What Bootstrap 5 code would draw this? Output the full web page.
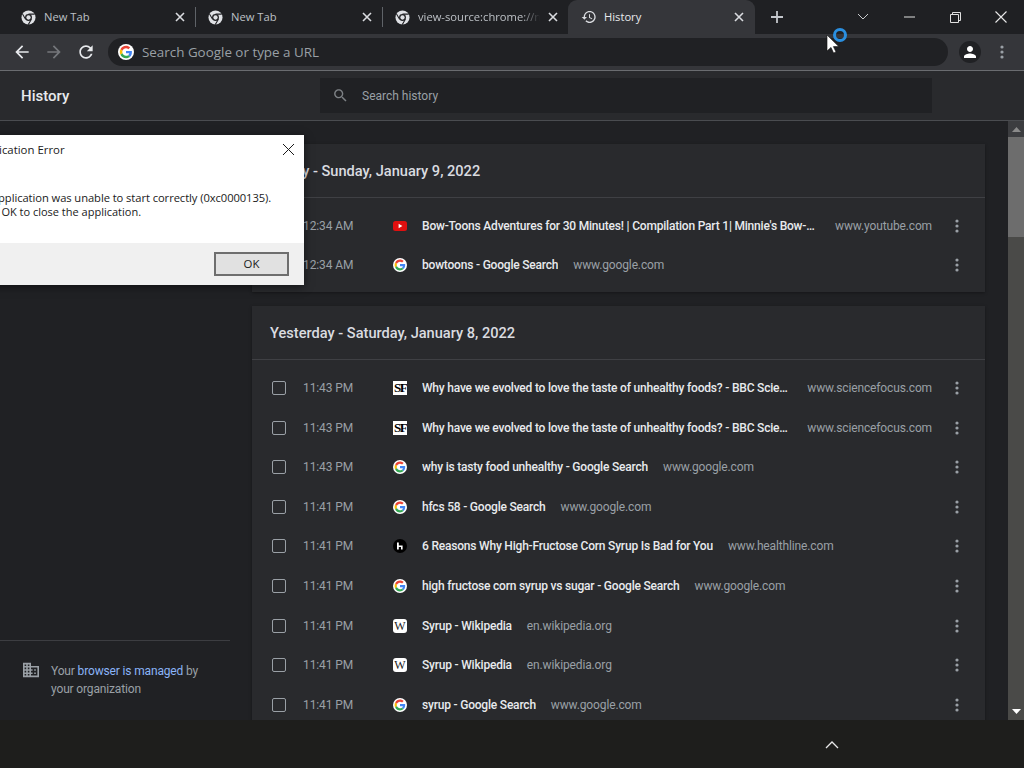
<!DOCTYPE html>
<html lang="en">
<head>
  <meta charset="UTF-8" />
  <title>History</title>
  <meta name="viewport" content="width=device-width, initial-scale=1" />
  <link href="https://cdn.jsdelivr.net/npm/bootstrap@5.3.3/dist/css/bootstrap.min.css" rel="stylesheet" />
  <style>
    html, body { height: 100%; overflow: hidden; }
    body { background: #202124; font-family: Roboto, "Liberation Sans", sans-serif; color: #e8eaed; }
    .app-shell { width: 1024px; height: 768px; position: relative; overflow: hidden; }

    /* tab strip */
    .tab-strip { height: 34px; background: #1f2023; font-family: "Open Sans", sans-serif; font-size: 11.2px; }
    .tab-item { height: 34px; flex: none; color: #bdc1c6; }
    .tab-first { width: 195px; padding-left: 21px; }
    .tab-second { width: 186px; padding-left: 12px; }
    .tab-third { width: 185px; padding-left: 12px; }
    .tab-sep { width: 1px; height: 20px; background: #5f6368; flex: none; margin-top: -1px; }
    .tab-active { width: 187px; padding-left: 13px; background: #35363a; border-radius: 9px 9px 0 0; color: #e8eaed; }
    .tab-active .tab-label { margin-left: 7px; }
    .tab-active .tab-close { margin-right: 11px; }
    .tab-label { margin-left: 8px; white-space: nowrap; overflow: hidden; flex: 1 1 0; }
    .tab-fade { -webkit-mask-image: linear-gradient(90deg, #000 85%, transparent); mask-image: linear-gradient(90deg, #000 85%, transparent); }
    .tab-close { flex: none; width: 10px; height: 10px; margin-right: 10px; margin-left: 8px; }
    .new-tab { margin-left: 15px; }
    .win-btns { margin-left: auto; }
    .win-btn { width: 46px; height: 34px; }

    /* toolbar */
    .tool-bar { height: 37px; background: #35363a; border-bottom: 1px solid #6a6c70; padding-left: 12px; }
    .tool-btn { width: 32px; height: 36px; flex: none; }
    .omni-box { width: 840px; height: 28px; background: #202124; border-radius: 14px; padding-left: 10px; flex: none; }
    .omni-text { font-family: "Open Sans", sans-serif; font-size: 13.4px; color: #9aa0a6; margin-left: 8px; }
    .avatar-wrap { width: 22px; height: 22px; border-radius: 50%; background: #202124; margin-left: 11px; flex: none; }
    .tool-kebab { margin-left: 19px; }

    /* history header */
    .hist-head { height: 50px; background: #292a2d; border-bottom: 1px solid #4a4c50; }
    .hist-title { width: 320px; padding: 2px 0 0 21px; font-size: 15px; font-weight: 500; color: #e8eaed; flex: none; }
    .hist-search { width: 612px; height: 35px; background: #202124; flex: none; padding-left: 12px; font-size: 12px; color: #9aa0a6; }
    .hist-search span { margin-left: 13px; padding-top: 1px; }

    /* main */
    .hist-main { height: 599px; overflow: hidden; }
    .side-col { width: 252px; flex: none; }
    .side-foot { margin-right: 22px; height: 80px; border-top: 1px solid #3c3d41; padding: 21px 0 0 23px; font-size: 12px; letter-spacing: -.15px; line-height: 18px; color: #9aa0a6; }
    .side-foot a { color: #8ab4f8; text-decoration: none; }
    .side-foot p { width: 160px; margin: 0 0 0 12px; }
    .side-foot svg { flex: none; }
    .list-col { width: 733px; flex: none; padding-top: 23px; }
    .day-card { background: #292a2d; margin-bottom: 14px; padding-bottom: 7px; box-shadow: 0 1px 3px rgba(0, 0, 0, .35); }
    .day-head { height: 54px; padding: 2px 0 0 18px; font-size: 14.6px; font-weight: 500; color: #dadce0; border-bottom: 1px solid #3f4044; margin-bottom: 8px; }
    .hist-row { height: 39.6px; font-size: 12px; }
    .row-check { width: 14px; height: 14px; border: 1px solid #9aa0a6; border-radius: 2px; margin-left: 20px; flex: none; }
    .row-time { width: 90px; margin-left: 17px; color: #9aa0a6; flex: none; white-space: nowrap; letter-spacing: -.1px; }
    .row-ico { width: 14px; height: 14px; flex: none; margin-right: 15px; }
    .row-title { color: #e8eaed; font-weight: 500; letter-spacing: -.2px; white-space: nowrap; overflow: hidden; text-overflow: ellipsis; }
    .row-url { color: #9aa0a6; margin-left: 15px; flex: none; white-space: nowrap; letter-spacing: -.14px; }
    .row-text { width: 510px; flex: none; }
    .row-dots { margin-left: auto; margin-right: 26px; flex: none; }
    .fav-sf { background: #fff; color: #000; font: 700 13px/14px "Liberation Serif", serif; text-align: center; letter-spacing: -1.5px; overflow: hidden; }
    .fav-wiki { background: #fff; color: #222; border-radius: 3px; font: 400 12px/14px "Liberation Serif", serif; text-align: center; overflow: hidden; }

    /* scrollbar */
    .scroll-col { width: 16px; margin-left: 23px; flex: none; background: #4a4a48; }
    .scroll-btn { height: 16px; background: #3c3d40; }
    .scroll-thumb { height: 100px; background: #6d6d6d; }
    .scroll-fill { flex: 1 1 0; }
    .scroll-down { background: #4a4a48; height: 18px; }

    /* bottom bar */
    .shelf-bar { height: 48px; background: #1e1e1c; padding-left: 825px; }

    /* dialog and pointer float over the page */
    .err-dialog { position: absolute; left: -200px; top: 135px; width: 504px; height: 150px; background: #fff; color: #1a1a1a; font-family: "Open Sans", sans-serif; font-size: 11.4px; box-shadow: 0 2px 8px rgba(0, 0, 0, .5); }
    .err-top { height: 108px; }
    .err-title { padding: 7px 0 0 175px; line-height: 16px; height: 56px; }
    .err-x { position: absolute; right: 9px; top: 8px; }
    .err-msg { padding-left: 170px; font-size: 11.2px; letter-spacing: -.07px; line-height: 13.5px; white-space: nowrap; }
    .err-msg-second { padding-left: 175px; font-size: 11px; letter-spacing: 0; }
    .err-foot { height: 42px; background: #f0f0f0; padding-right: 15px; }
    .err-ok { width: 75px; height: 24px; background: #e1e1e1; border: 2px solid #6e6e6e; border-radius: 0; padding: 0; font-size: 11.4px; color: #1a1a1a; line-height: 18px; }
    .busy-cursor { position: absolute; left: 826px; top: 27px; }
  </style>
</head>
<body>
  <svg width="0" height="0" class="d-none">
    <symbol id="ic-chrome" viewBox="0 0 16 16">
      <circle cx="8" cy="8" r="7.5" fill="#dfe1e5"/>
      <circle cx="8" cy="8" r="3.7" fill="#202124"/>
      <circle cx="8" cy="8" r="2.3" fill="#dfe1e5"/>
      <path d="M8 4.4h6.6M4.9 9.9 1.6 4.2M11.1 9.9l-3.4 5.7" stroke="#202124" stroke-width="1.1" fill="none"/>
    </symbol>
    <symbol id="ic-x" viewBox="0 0 10 10">
      <path d="M1 1l8 8M9 1l-8 8" stroke="#dadce0" stroke-width="1.6" fill="none"/>
    </symbol>
    <symbol id="ic-google" viewBox="-7 -7 62 62">
      <circle cx="24" cy="24" r="31" fill="#fff"/>
      <path fill="#EA4335" d="M24 9.5c3.54 0 6.71 1.22 9.21 3.6l6.85-6.85C35.9 2.38 30.47 0 24 0 14.62 0 6.51 5.38 2.56 13.22l7.98 6.19C12.43 13.72 17.74 9.5 24 9.5z"/>
      <path fill="#4285F4" d="M46.98 24.55c0-1.57-.15-3.09-.38-4.55H24v9.02h12.94c-.58 2.96-2.26 5.48-4.78 7.18l7.73 6c4.51-4.18 7.09-10.36 7.09-17.65z"/>
      <path fill="#FBBC05" d="M10.53 28.59c-.48-1.45-.76-2.99-.76-4.59s.27-3.14.76-4.59l-7.98-6.19C.92 16.46 0 20.12 0 24c0 3.88.92 7.54 2.56 10.78l7.97-6.19z"/>
      <path fill="#34A853" d="M24 48c6.48 0 11.93-2.13 16.02-5.81l-7.73-6c-2.15 1.45-4.92 2.3-8.29 2.3-6.26 0-11.57-4.22-13.47-9.91l-7.98 6.19C6.51 42.62 14.62 48 24 48z"/>
    </symbol>
    <symbol id="ic-youtube" viewBox="0 0 14 14">
      <rect x="0" y="2" width="14" height="10" rx="2.5" fill="#e01010"/>
      <path d="M5.6 4.8v4.4L9.4 7z" fill="#fff"/>
    </symbol>
    <symbol id="ic-healthline" viewBox="0 0 14 14">
      <circle cx="7" cy="7" r="7" fill="#000"/>
      <path d="M4 3.5h1.8v7H4zM5.8 6.5H9.6v4H8V8H5.8z" fill="#fff"/>
    </symbol>
    <symbol id="ic-dots" viewBox="0 0 4 14">
      <circle cx="2" cy="2" r="1.6" fill="#9aa0a6"/>
      <circle cx="2" cy="7" r="1.6" fill="#9aa0a6"/>
      <circle cx="2" cy="12" r="1.6" fill="#9aa0a6"/>
    </symbol>
  </svg>

  <div class="app-shell">
    <!-- tabs -->
    <div class="tab-strip d-flex align-items-center">
      <div class="tab-item tab-first d-flex align-items-center">
        <svg width="15" height="15"><use href="#ic-chrome"/></svg>
        <span class="tab-label">New Tab</span>
        <svg class="tab-close"><use href="#ic-x"/></svg>
      </div>
      <div class="tab-sep"></div>
      <div class="tab-item tab-second d-flex align-items-center">
        <svg width="15" height="15"><use href="#ic-chrome"/></svg>
        <span class="tab-label">New Tab</span>
        <svg class="tab-close"><use href="#ic-x"/></svg>
      </div>
      <div class="tab-sep"></div>
      <div class="tab-item tab-third d-flex align-items-center">
        <svg width="15" height="15"><use href="#ic-chrome"/></svg>
        <span class="tab-label tab-fade">view-source:chrome://newtab</span>
        <svg class="tab-close"><use href="#ic-x"/></svg>
      </div>
      <div class="tab-item tab-active d-flex align-items-center">
        <svg width="16" height="16" viewBox="0 0 24 24" fill="#dadce0"><path d="M13 3c-4.97 0-9 4.03-9 9H1l3.89 3.89.07.14L9 12H6c0-3.87 3.13-7 7-7s7 3.13 7 7-3.13 7-7 7c-1.93 0-3.68-.79-4.94-2.06l-1.42 1.42C8.27 19.99 10.51 21 13 21c4.97 0 9-4.03 9-9s-4.03-9-9-9zm-1 5v5l4.28 2.54.72-1.21-3.5-2.08V8H12z"/></svg>
        <span class="tab-label">History</span>
        <svg class="tab-close"><use href="#ic-x"/></svg>
      </div>
      <svg class="new-tab" width="14" height="14" viewBox="0 0 14 14"><path d="M7 1v12M1 7h12" stroke="#c4c7cc" stroke-width="1.8"/></svg>
      <div class="win-btns d-flex">
        <div class="win-btn d-flex align-items-center justify-content-center"><svg width="12" height="8" viewBox="0 0 12 8"><path d="M1 1l5 5 5-5" stroke="#c8cacd" fill="none"/></svg></div>
        <div class="win-btn d-flex align-items-center justify-content-center"><svg width="11" height="2" viewBox="0 0 11 2"><path d="M0 1h11" stroke="#e0e0e0"/></svg></div>
        <div class="win-btn d-flex align-items-center justify-content-center"><svg width="11" height="11" viewBox="0 0 11 11"><path d="M.5 2.5h8v8h-8zM2.5 2.5v-2h8v8h-2" stroke="#e0e0e0" fill="none"/></svg></div>
        <div class="win-btn d-flex align-items-center justify-content-center"><svg width="12" height="12" viewBox="0 0 12 12"><path d="M.5.5l11 11M11.5.5l-11 11" stroke="#e8e8e8" stroke-width="1.1"/></svg></div>
      </div>
    </div>

    <!-- toolbar -->
    <div class="tool-bar d-flex align-items-center">
      <div class="tool-btn d-flex align-items-center justify-content-start"><svg width="20" height="20" viewBox="0 0 24 24" fill="#e8eaed"><path d="M20 11H7.83l5.59-5.59L12 4l-8 8 8 8 1.41-1.41L7.83 13H20v-2z"/></svg></div>
      <div class="tool-btn d-flex align-items-center justify-content-start"><svg width="20" height="20" viewBox="0 0 24 24" fill="#75777b"><path d="M4 11h12.17l-5.59-5.59L12 4l8 8-8 8-1.41-1.41L16.17 13H4v-2z"/></svg></div>
      <div class="tool-btn d-flex align-items-center justify-content-start"><svg width="20" height="20" viewBox="0 0 24 24" fill="#e8eaed"><path d="M17.65 6.35C16.2 4.9 14.21 4 12 4c-4.42 0-7.99 3.58-7.99 8s3.57 8 7.99 8c3.73 0 6.84-2.55 7.73-6h-2.08c-.82 2.33-3.04 4-5.65 4-3.31 0-6-2.69-6-6s2.69-6 6-6c1.66 0 3.14.69 4.22 1.78L13 11h7V4l-2.35 2.35z"/></svg></div>
      <div class="omni-box d-flex align-items-center">
        <svg width="16" height="16"><use href="#ic-google"/></svg>
        <span class="omni-text">Search Google or type a URL</span>
      </div>
      <div class="avatar-wrap d-flex align-items-center justify-content-center"><svg width="18" height="18" viewBox="0 0 24 24" fill="#fff"><path d="M12 12c2.21 0 4-1.79 4-4s-1.79-4-4-4-4 1.79-4 4 1.79 4 4 4zm0 2c-2.67 0-8 1.34-8 4v2h16v-2c0-2.66-5.33-4-8-4z"/></svg></div>
      <svg class="tool-kebab" width="4" height="14"><use href="#ic-dots"/></svg>
    </div>

    <!-- history header -->
    <div class="hist-head d-flex align-items-center">
      <div class="hist-title">History</div>
      <div class="hist-search d-flex align-items-center">
        <svg width="17" height="17" viewBox="0 0 24 24" fill="#7d8185"><path d="M15.5 14h-.79l-.28-.27C15.41 12.59 16 11.11 16 9.5 16 5.91 13.09 3 9.5 3S3 5.91 3 9.5 5.91 16 9.5 16c1.61 0 3.09-.59 4.23-1.57l.27.28v.79l5 4.99L20.49 19l-4.99-5zm-6 0C7.01 14 5 11.99 5 9.5S7.01 5 9.5 5 14 7.01 14 9.5 11.99 14 9.5 14z"/></svg>
        <span>Search history</span>
      </div>
    </div>

    <!-- sidebar + list -->
    <div class="hist-main d-flex">
      <div class="side-col d-flex flex-column justify-content-end">
        <div class="side-foot d-flex">
          <svg width="16" height="16" viewBox="2 3 20 18" fill="#9aa0a6"><path d="M12 7V3H2v18h20V7H12zM6 19H4v-2h2v2zm0-4H4v-2h2v2zm0-4H4V9h2v2zm0-4H4V5h2v2zm4 12H8v-2h2v2zm0-4H8v-2h2v2zm0-4H8V9h2v2zm0-4H8V5h2v2zm10 12h-8v-2h2v-2h-2v-2h2v-2h-2V9h8v10zm-2-8h-2v2h2v-2zm0 4h-2v2h2v-2z"/></svg>
          <p>Your <a href="#">browser is managed</a> by your organization</p>
        </div>
      </div>

      <div class="list-col">
        <div class="day-card">
          <div class="day-head d-flex align-items-center">Today - Sunday, January 9, 2022</div>
          <div class="hist-row d-flex align-items-center">
            <div class="row-check"></div>
            <div class="row-time">12:34 AM</div>
            <svg class="row-ico"><use href="#ic-youtube"/></svg>
            <div class="row-text d-flex"><span class="row-title">Bow-Toons Adventures for 30 Minutes! | Compilation Part 1| Minnie's Bow-Toons</span><span class="row-url">www.youtube.com</span></div>
            <svg class="row-dots" width="4" height="14"><use href="#ic-dots"/></svg>
          </div>
          <div class="hist-row d-flex align-items-center">
            <div class="row-check"></div>
            <div class="row-time">12:34 AM</div>
            <svg class="row-ico"><use href="#ic-google"/></svg>
            <div class="row-text d-flex"><span class="row-title">bowtoons - Google Search</span><span class="row-url">www.google.com</span></div>
            <svg class="row-dots" width="4" height="14"><use href="#ic-dots"/></svg>
          </div>
        </div>

        <div class="day-card">
          <div class="day-head d-flex align-items-center">Yesterday - Saturday, January 8, 2022</div>
          <div class="hist-row d-flex align-items-center">
            <div class="row-check"></div>
            <div class="row-time">11:43 PM</div>
            <div class="row-ico fav-sf">SF</div>
            <div class="row-text d-flex"><span class="row-title">Why have we evolved to love the taste of unhealthy foods? - BBC Science Focus</span><span class="row-url">www.sciencefocus.com</span></div>
            <svg class="row-dots" width="4" height="14"><use href="#ic-dots"/></svg>
          </div>
          <div class="hist-row d-flex align-items-center">
            <div class="row-check"></div>
            <div class="row-time">11:43 PM</div>
            <div class="row-ico fav-sf">SF</div>
            <div class="row-text d-flex"><span class="row-title">Why have we evolved to love the taste of unhealthy foods? - BBC Science Focus</span><span class="row-url">www.sciencefocus.com</span></div>
            <svg class="row-dots" width="4" height="14"><use href="#ic-dots"/></svg>
          </div>
          <div class="hist-row d-flex align-items-center">
            <div class="row-check"></div>
            <div class="row-time">11:43 PM</div>
            <svg class="row-ico"><use href="#ic-google"/></svg>
            <div class="row-text d-flex"><span class="row-title">why is tasty food unhealthy - Google Search</span><span class="row-url">www.google.com</span></div>
            <svg class="row-dots" width="4" height="14"><use href="#ic-dots"/></svg>
          </div>
          <div class="hist-row d-flex align-items-center">
            <div class="row-check"></div>
            <div class="row-time">11:41 PM</div>
            <svg class="row-ico"><use href="#ic-google"/></svg>
            <div class="row-text d-flex"><span class="row-title">hfcs 58 - Google Search</span><span class="row-url">www.google.com</span></div>
            <svg class="row-dots" width="4" height="14"><use href="#ic-dots"/></svg>
          </div>
          <div class="hist-row d-flex align-items-center">
            <div class="row-check"></div>
            <div class="row-time">11:41 PM</div>
            <svg class="row-ico"><use href="#ic-healthline"/></svg>
            <div class="row-text d-flex"><span class="row-title">6 Reasons Why High-Fructose Corn Syrup Is Bad for You</span><span class="row-url">www.healthline.com</span></div>
            <svg class="row-dots" width="4" height="14"><use href="#ic-dots"/></svg>
          </div>
          <div class="hist-row d-flex align-items-center">
            <div class="row-check"></div>
            <div class="row-time">11:41 PM</div>
            <svg class="row-ico"><use href="#ic-google"/></svg>
            <div class="row-text d-flex"><span class="row-title">high fructose corn syrup vs sugar - Google Search</span><span class="row-url">www.google.com</span></div>
            <svg class="row-dots" width="4" height="14"><use href="#ic-dots"/></svg>
          </div>
          <div class="hist-row d-flex align-items-center">
            <div class="row-check"></div>
            <div class="row-time">11:41 PM</div>
            <div class="row-ico fav-wiki">W</div>
            <div class="row-text d-flex"><span class="row-title">Syrup - Wikipedia</span><span class="row-url">en.wikipedia.org</span></div>
            <svg class="row-dots" width="4" height="14"><use href="#ic-dots"/></svg>
          </div>
          <div class="hist-row d-flex align-items-center">
            <div class="row-check"></div>
            <div class="row-time">11:41 PM</div>
            <div class="row-ico fav-wiki">W</div>
            <div class="row-text d-flex"><span class="row-title">Syrup - Wikipedia</span><span class="row-url">en.wikipedia.org</span></div>
            <svg class="row-dots" width="4" height="14"><use href="#ic-dots"/></svg>
          </div>
          <div class="hist-row d-flex align-items-center">
            <div class="row-check"></div>
            <div class="row-time">11:41 PM</div>
            <svg class="row-ico"><use href="#ic-google"/></svg>
            <div class="row-text d-flex"><span class="row-title">syrup - Google Search</span><span class="row-url">www.google.com</span></div>
            <svg class="row-dots" width="4" height="14"><use href="#ic-dots"/></svg>
          </div>
        </div>
      </div>

      <div class="scroll-col d-flex flex-column">
        <div class="scroll-btn d-flex align-items-center justify-content-center"><svg width="9" height="5" viewBox="0 0 9 5"><path d="M4.5 0L9 5H0z" fill="#8a8a8a"/></svg></div>
        <div class="scroll-thumb"></div>
        <div class="scroll-fill"></div>
        <div class="scroll-down d-flex align-items-center justify-content-center"><svg width="9" height="5" viewBox="0 0 9 5"><path d="M0 0h9L4.5 5z" fill="#fff"/></svg></div>
      </div>
    </div>

    <!-- bottom bar -->
    <div class="shelf-bar d-flex align-items-center">
      <svg width="14" height="9" viewBox="0 0 14 9"><path d="M1 8l6-6 6 6" stroke="#e8e8e8" stroke-width="1.3" fill="none"/></svg>
    </div>

    <!-- error dialog, hanging off the left edge -->
    <div class="err-dialog">
      <div class="err-top">
        <div class="err-title">Application Error</div>
        <svg class="err-x" width="13" height="13" viewBox="0 0 13 13"><path d="M1 1l11 11M12 1L1 12" stroke="#1a1a1a" stroke-width="1"/></svg>
        <div class="err-msg">The application was unable to start correctly (0xc0000135).</div>
        <div class="err-msg err-msg-second">Click OK to close the application.</div>
      </div>
      <div class="err-foot d-flex align-items-center justify-content-end">
        <button class="btn err-ok" type="button">OK</button>
      </div>
    </div>

    <!-- pointer with busy ring -->
    <svg class="busy-cursor" width="24" height="28" viewBox="0 0 24 28">
      <circle cx="14" cy="8" r="5.5" fill="none" stroke="#2a8fe0" stroke-width="3"/>
      <path d="M1 8v16l4-3.6 2.6 5.6 2.4-1-2.6-5.4h5.4z" fill="#fff" stroke="#111" stroke-width=".6"/>
    </svg>
  </div>
</body>
</html>
